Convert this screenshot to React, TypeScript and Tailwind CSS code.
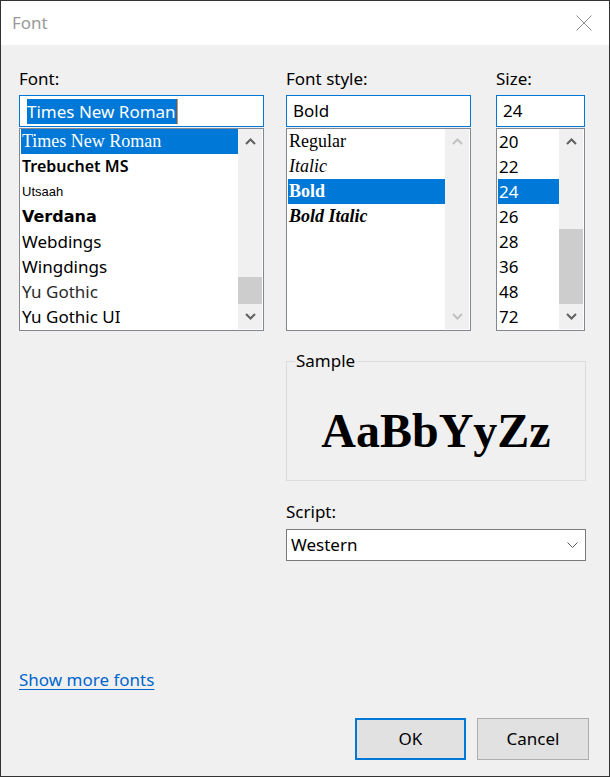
import React from 'react';

type Item = { name: string; cls: string; selected?: boolean };

const fontItems: Item[] = [
  { name: 'Times New Roman', cls: "font-['Liberation_Serif',serif] text-[18px]", selected: true },
  { name: 'Trebuchet MS', cls: 'font-semibold text-[16px]' },
  { name: 'Utsaah', cls: "font-['Liberation_Sans',sans-serif] text-[13px] leading-[20px]" },
  { name: 'Verdana', cls: "font-['DejaVu_Sans',sans-serif] font-bold text-[16px]" },
  { name: 'Webdings', cls: 'text-[17px]' },
  { name: 'Wingdings', cls: 'text-[17px]' },
  { name: 'Yu Gothic', cls: 'text-[17px] text-[#2a2a2a]' },
  { name: 'Yu Gothic UI', cls: 'text-[17px]' },
];

const styleItems: Item[] = [
  { name: 'Regular', cls: "font-['Liberation_Serif',serif] text-[18px]" },
  { name: 'Italic', cls: "font-['Liberation_Serif',serif] text-[18px] italic" },
  { name: 'Bold', cls: "font-['Liberation_Serif',serif] text-[18px] font-bold", selected: true },
  { name: 'Bold Italic', cls: "font-['Liberation_Serif',serif] text-[18px] font-bold italic" },
];

const sizeItems: Item[] = ['20', '22', '24', '26', '28', '36', '48', '72'].map((s) => ({
  name: s,
  cls: 'text-[17px]',
  selected: s === '24',
}));

function Chevron({ up, color }: { up?: boolean; color: string }) {
  return (
    <svg width="11" height="7" viewBox="0 0 11 7">
      <polyline
        points={up ? '1,6 5.5,1.5 10,6' : '1,1 5.5,5.5 10,1'}
        fill="none"
        stroke={color}
        strokeWidth="2"
      />
    </svg>
  );
}

function ScrollBar({ thumb, disabled }: { thumb?: string; disabled?: boolean }) {
  const color = disabled ? '#c2c2c2' : '#606060';
  return (
    <div className="w-[24px] bg-[#f0f0f0] flex flex-col">
      <div className="h-[25px] flex items-center justify-center">
        <Chevron up color={color} />
      </div>
      <div className="flex-1 flex flex-col">
        {thumb && <div className={`bg-[#cdcdcd] ${thumb}`} />}
      </div>
      <div className="h-[25px] flex items-center justify-center">
        <Chevron color={color} />
      </div>
    </div>
  );
}

function ListBox({ items, thumb, disabled }: { items: Item[]; thumb?: string; disabled?: boolean }) {
  return (
    <div className="mt-[1px] h-[203px] border border-[#828790] bg-white flex px-[1px] pb-[1px]">
      <div className="flex-1 flex flex-col overflow-hidden">
        {items.map((it) => (
          <div
            key={it.name}
            className={`h-[25px] leading-[25px] px-[1px] whitespace-nowrap ${it.cls} ${
              it.selected ? 'bg-[#0078d7] text-white' : ''
            }`}
          >
            {it.name}
          </div>
        ))}
      </div>
      <ScrollBar thumb={thumb} disabled={disabled} />
    </div>
  );
}

function Column({
  label,
  width,
  children,
  input,
}: {
  label: string;
  width: string;
  children: React.ReactNode;
  input: React.ReactNode;
}) {
  return (
    <div className={`flex flex-col ${width}`}>
      <div className="leading-[24px] mb-[4px]">{label}</div>
      <div className="h-[32px] border border-[#0078d7] bg-white flex items-center">{input}</div>
      {children}
    </div>
  );
}

export default function App() {
  return (
    <div className="w-[610px] h-[777px] border border-[#333] flex flex-col font-['Noto_Sans',sans-serif] text-[17px] text-black bg-[#f0f0f0]">
      {/* title bar */}
      <div className="h-[44px] bg-white flex items-center justify-between pl-[11px] pr-[17px]">
        <span className="leading-[24px] text-[#999]">Font</span>
        <svg width="16" height="16" viewBox="0 0 16 16">
          <path d="M0.5 0.5 L15.5 15.5 M15.5 0.5 L0.5 15.5" stroke="#8f8f8f" strokeWidth="1" />
        </svg>
      </div>

      <div className="flex-1 flex flex-col pt-[22px] pl-[18px] pr-[20px] pb-[16px]">
        <div className="flex">
          <Column
            label="Font:"
            width="w-[245px]"
            input={
              <div className="pl-[7px] flex items-center">
                <span className="bg-[#0078d7] text-white leading-[25px] pr-[1px]">Times New Roman</span>
                <span className="w-[1px] h-[25px] bg-[#ff8728]" />
              </div>
            }
          >
            <ListBox items={fontItems} thumb="mt-[123px] h-[27px]" />
          </Column>
          <Column
            label="Font style:"
            width="w-[185px] ml-[22px]"
            input={<span className="pl-[6px] leading-[24px]">Bold</span>}
          >
            <ListBox items={styleItems} disabled />
          </Column>
          <Column
            label="Size:"
            width="w-[89px] ml-[25px]"
            input={<span className="pl-[6px] leading-[24px]">24</span>}
          >
            <ListBox items={sizeItems} thumb="mt-[75px] h-[75px]" />
          </Column>
        </div>

        <div className="ml-[267px] w-[300px] flex flex-col">
          <fieldset className="mt-[18px] border border-[#dcdcdc]">
            <legend className="ml-[8px] px-[1px] leading-[24px]">Sample</legend>
            <div className="h-[107px] pt-[8px] flex items-center justify-center">
              <span className="font-['Liberation_Serif',serif] font-bold text-[48px] leading-none">
                AaBbYyZz
              </span>
            </div>
          </fieldset>
          <div className="mt-[19px] leading-[24px]">Script:</div>
          <div className="mt-[5px] h-[32px] border border-[#7a7a7a] bg-white flex items-center justify-between pl-[4px] pr-[7px]">
            <span className="leading-[24px]">Western</span>
            <svg width="11" height="6" viewBox="0 0 11 6">
              <polyline points="0.5,0.5 5.5,5.5 10.5,0.5" fill="none" stroke="#5a5a5a" strokeWidth="1" />
            </svg>
          </div>
        </div>

        <div className="flex-1" />

        <div className="mb-[26px] leading-[24px]">
          <a href="#" className="text-[#0066cc] underline underline-offset-[3px]">
            Show more fonts
          </a>
        </div>

        <div className="flex justify-end gap-[11px]">
          <button className="w-[111px] h-[42px] bg-[#e1e1e1] border-2 border-[#0078d7]">OK</button>
          <button className="w-[112px] h-[42px] bg-[#e1e1e1] border border-[#adadad]">Cancel</button>
        </div>
      </div>
    </div>
  );
}
